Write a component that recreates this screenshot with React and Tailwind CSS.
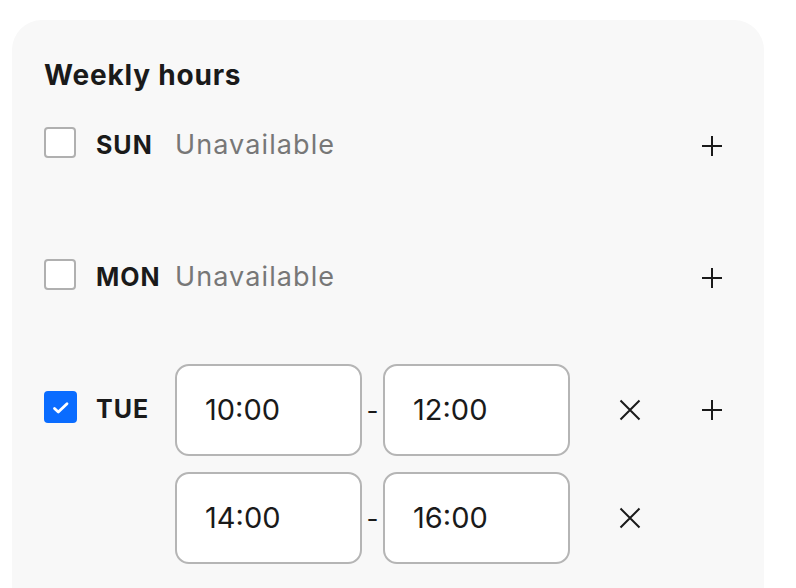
import React from "react";

const font = { fontFamily: "Inter, 'Noto Sans', sans-serif" };

function Plus() {
  return (
    <svg width="22" height="22" viewBox="0 0 22 22" fill="none">
      <path d="M11 1v20M1 11h20" stroke="#1a1a1a" strokeWidth="2" />
    </svg>
  );
}

function XIcon() {
  return (
    <svg width="22" height="22" viewBox="0 0 22 22" fill="none">
      <path d="M1.5 1.5l19 19M20.5 1.5l-19 19" stroke="#1a1a1a" strokeWidth="2" />
    </svg>
  );
}

function Checkbox({ checked }) {
  if (checked) {
    return (
      <div className="w-[33px] h-[32px] rounded-[4px] bg-[#0a6cff] flex items-center justify-center">
        <svg width="33" height="32" viewBox="0 0 33 32" fill="none">
          <path d="M10.5 17.5l3.8 3.6L23 12.8" stroke="#fff" strokeWidth="2.8" strokeLinecap="round" strokeLinejoin="round" />
        </svg>
      </div>
    );
  }
  return <div className="w-[32px] h-[31px] rounded-[4px] bg-white border-2 border-[#b0b0b0]" />;
}

function TimeInput({ value }) {
  return (
    <div className="w-[187px] h-[92px] rounded-[14px] border-2 border-[#b5b5b5] bg-white flex items-center pl-[28px] text-[29px] text-[#1a1a1a]">
      {value}
    </div>
  );
}

function Slot({ from, to }) {
  return (
    <div className="flex items-center">
      <TimeInput value={from} />
      <div className="w-[21px] text-center text-[26px] text-[#1a1a1a]">-</div>
      <TimeInput value={to} />
      <div className="ml-[49px] w-[22px] flex items-center justify-center">
        <XIcon />
      </div>
    </div>
  );
}

function DayRow({ day, checked, slots }) {
  return (
    <div className="flex flex-col gap-[16px]">
      {(slots && slots.length ? slots : [null]).map((slot, i) => (
        <div key={i} className="flex items-start h-[92px]">
          <div className="w-[32px] mt-[27px]">{i === 0 && <Checkbox checked={checked} />}</div>
          <div className="w-[79px] ml-[20px] mt-[29px] leading-[32px] text-[25px] font-bold tracking-[1px] text-[#1a1a1a]">
            {i === 0 ? day : ""}
          </div>
          <div className="flex-1 h-[92px] flex items-center">
            {slot ? (
              <Slot from={slot[0]} to={slot[1]} />
            ) : (
              <div className="self-start mt-[29px] leading-[32px] text-[27px] tracking-[1.1px] text-[#777777]">Unavailable</div>
            )}
          </div>
          <div className="w-[22px] h-[92px] flex items-center justify-center">{i === 0 && <Plus />}</div>
        </div>
      ))}
    </div>
  );
}

export default function App() {
  return (
    <div className="w-[796px] h-[588px] overflow-hidden bg-white pt-[20px] pl-[12px]" style={font}>
      <div className="w-[752px] h-[640px] rounded-[30px] bg-[#f8f8f8] pt-[37px] pl-[32px] pr-[41px]">
        <div className="text-[28px] leading-[36px] font-bold tracking-[0.8px] text-[#1a1a1a] mb-[7px]">Weekly hours</div>
        <div className="flex flex-col gap-[40px]">
          <DayRow day="SUN" />
          <DayRow day="MON" />
          <DayRow day="TUE" checked slots={[["10:00", "12:00"], ["14:00", "16:00"]]} />
        </div>
      </div>
    </div>
  );
}
